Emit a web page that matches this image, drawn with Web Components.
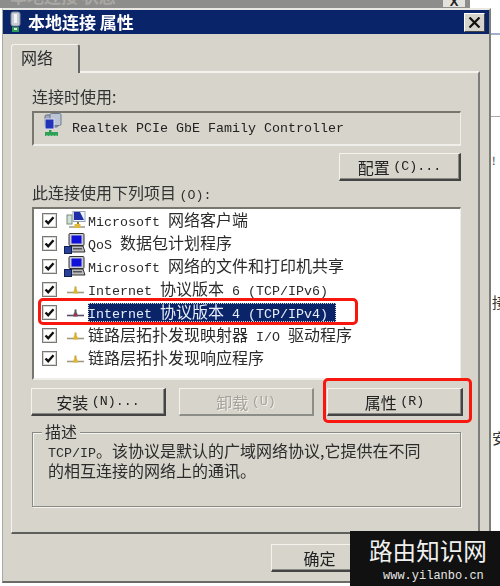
<!DOCTYPE html>
<html lang="zh"><head><meta charset="utf-8"><title>本地连接 属性</title>
<style>
html,body{margin:0;padding:0;background:#fff;overflow:hidden}
</style></head><body>
<x-desktop>
  <x-dialog>
    <x-titlebar>本地连接&nbsp;属性</x-titlebar>
    <x-tabbar>网络</x-tabbar>
    <x-panel>
      <x-label>连接时使用:</x-label>
      <x-field><x-icon slot="icon" type="nic"></x-icon><x-l>Realtek PCIe GbE Family Controller</x-l></x-field>
      <x-action><x-btn w="122">配置 <x-l>(C)...</x-l></x-btn></x-action>
      <x-label second>此连接使用下列项目 <x-l>(O):</x-l></x-label>
      <x-list>
        <x-row><x-icon slot="icon" type="client"></x-icon><x-l>Microsoft </x-l>网络客户端</x-row>
        <x-row><x-icon slot="icon" type="pc"></x-icon><x-l>QoS </x-l>数据包计划程序</x-row>
        <x-row><x-icon slot="icon" type="pc"></x-icon><x-l>Microsoft </x-l>网络的文件和打印机共享</x-row>
        <x-row><x-icon slot="icon" type="proto"></x-icon><x-l>Internet </x-l>协议版本<x-l> 6 (TCP/IPv6)</x-l></x-row>
        <x-row selected><x-icon slot="icon" type="proto" dark></x-icon><x-l>Internet </x-l>协议版本<x-l> 4 (TCP/IPv4)</x-l></x-row>
        <x-row><x-icon slot="icon" type="proto"></x-icon>链路层拓扑发现映射器<x-l> I/O </x-l>驱动程序</x-row>
        <x-row><x-icon slot="icon" type="proto"></x-icon>链路层拓扑发现响应程序</x-row>
      </x-list>
      <x-actions>
        <x-btn>安装 <x-l>(N)...</x-l></x-btn>
        <x-btn disabled>卸载 <x-l>(U)</x-l></x-btn>
        <x-btn>属性 <x-l>(R)</x-l></x-btn>
      </x-actions>
      <x-group legend="描述"><x-l>TCP/IP</x-l>。该协议是默认的广域网络协议,它提供在不同<br>的相互连接的网络上的通讯。</x-group>
    </x-panel>
    <x-footer><x-btn w="98">确定</x-btn></x-footer>
  </x-dialog>
  <x-redbox style="left:38px;top:298px;width:320px;height:27px"></x-redbox>
  <x-redbox style="left:323px;top:378px;width:149px;height:45px"></x-redbox>
  <x-watermark></x-watermark>
</x-desktop>
<script>
const F='"Noto Sans CJK SC","Liberation Sans",sans-serif';
const def=(n,h)=>customElements.define(n,class extends HTMLElement{constructor(){super();this.attachShadow({mode:'open'}).innerHTML=h}});

def('x-l',`<style>:host{display:inline;font-family:"Liberation Mono",monospace;font-size:13.33px;white-space:pre}</style><slot></slot>`);

def('x-desktop',`<style>
:host{display:block;position:relative;width:500px;height:586px;overflow:hidden;background:#fff;font-family:${F};color:#2b2b2b}
.parent{height:8px;width:470px;background:#8d8d8b;overflow:hidden;position:relative}
.parent span{display:block;margin:-16px 0 0 10px;font-size:17px;font-weight:700;line-height:24px;color:#a9a8a4;white-space:pre}
.pclose{position:absolute;left:443px;top:0;width:22px;height:7px;background:#e4e2dc;font:700 13px/3px "Liberation Sans",sans-serif;color:#222;text-align:center}
.bit{position:absolute;left:492px;font-size:15px;line-height:16px;color:#333;white-space:pre}
.ln{position:absolute;left:491px;width:9px;height:1px}
</style>
<div class="parent"><span>本地连接 状态</span><div class="pclose">X</div></div>
<div class="ln" style="top:33px;height:2px;background:#9fb0d0"></div>
<div class="ln" style="top:116px;background:#aaa"></div>
<div class="bit" style="top:294px">接</div>
<div class="bit" style="top:430px">安</div>
<div class="bit" style="top:152px;font-size:11px">!</div>
<slot></slot>`);

def('x-dialog',`<style>
:host{display:flex;flex-direction:column;box-sizing:border-box;width:489px;height:575px;margin-left:2px;background:#d6d4cb;
border-top:2px solid #e9e8e3;border-left:1px solid #a8a8a2;border-right:2px solid #7d7d79;border-bottom:2px solid #6a6a66;filter:blur(.35px)}
</style><slot></slot>`);

def('x-titlebar',`<style>
:host{display:flex;align-items:center;height:24px;background:#0a246a;color:#fff;font-size:17px;font-weight:700;line-height:24px;padding-left:6px;white-space:pre}
svg{flex:none;margin-right:6px}
.t{flex:1}
.x{flex:none;box-sizing:border-box;width:21px;height:19px;margin-right:4px;background:#d6d4cb;border:1px solid;border-color:#fff #444 #444 #fff;display:flex;align-items:center;justify-content:center}
</style>
<svg width="13" height="24" viewBox="0 0 13 24"><rect x="2" y="2" width="9" height="14" rx="2" fill="#c9ccd4" stroke="#7d8a9a"/><rect x="5" y="4" width="3" height="9" fill="#f2f4f8"/><rect x="3" y="17" width="7" height="5" fill="#2f9a55"/><rect x="5" y="18" width="3" height="2" fill="#d8f0d8"/></svg>
<span class="t"><slot></slot></span>
<span class="x"><svg style="margin:0" width="13" height="11" viewBox="0 0 13 11"><path d="M1.500 .5 11.500 10.500M11.500 .5 1.500 10.500" stroke="#111" stroke-width="2.2" fill="none"/></svg></span>`);

def('x-tabbar',`<style>
:host{display:block;height:38px;padding:10px 0 0 8px;box-sizing:border-box;margin-bottom:-1px;position:relative;z-index:1}
.tab{box-sizing:border-box;width:69px;height:29px;padding:0 0 0 9px;font-size:16px;line-height:25px;background:#d6d4cb;
border:solid;border-width:1px 2px 0 1px;border-color:#f4f3ee #666 transparent #f4f3ee;border-radius:3px 3px 0 0}
</style><div class="tab"><slot></slot></div>`);

def('x-panel',`<style>
:host{display:block;box-sizing:border-box;width:469px;height:463px;margin-left:8px;padding:14px 18px 0 20px;
border:solid;border-width:2px 2px 2px 1px;border-color:#f4f3ee #7c7c78 #5e5e5a #f4f3ee}
</style><slot></slot>`);

def('x-label',`<style>
:host{display:block;height:20px;font-size:16px;line-height:18px;white-space:pre;color:#333}
:host([second]){margin-top:2px}
</style><slot></slot>`);

def('x-field',`<style>
:host{display:flex;align-items:flex-start;box-sizing:border-box;width:429px;height:35px;margin:4px 0 0;padding:0 0 0 8px;gap:10px;color:#222;
border:solid;border-width:2px 1px 2px 2px;border-color:#77776f #efeee9 #efeee9 #77776f}
span{line-height:24px}
</style><slot name="icon"></slot><span><slot></slot></span>`);

def('x-action',`<style>:host{display:flex;justify-content:flex-end;margin:7px 0 0;width:429px}</style><slot></slot>`);

customElements.define('x-btn',class extends HTMLElement{constructor(){super();
const w=this.getAttribute('w');
this.attachShadow({mode:'open'}).innerHTML=`<style>
:host{display:flex;align-items:center;justify-content:center;box-sizing:border-box;height:28px;${w?`width:${w}px;`:''}font-size:16px;line-height:24px;white-space:pre;color:#222;background:#d6d4cb;
border:solid;border-width:1px 2px 2px 1px;border-color:#f4f3ee #444 #444 #f4f3ee;box-shadow:inset -1px -1px 0 #8a8a84}
:host([disabled]){color:#a5a39b;border-color:#f4f3ee #8e8e88 #8e8e88 #f4f3ee;box-shadow:none;text-shadow:1px 1px 0 #f0efea}
</style><slot></slot>`}});

def('x-list',`<style>
:host{display:block;box-sizing:border-box;width:429px;height:173px;margin:4px 0 0;background:#fff;
border:solid;border-width:2px 1px 2px 2px;border-color:#77776f #efeee9 #efeee9 #77776f}
</style><slot></slot>`);

def('x-row',`<style>
:host{display:flex;align-items:center;height:23px;padding-left:8px;font-size:16px;color:#2b2b2b;white-space:pre}
svg{flex:none;margin-right:7px}
.t{line-height:16px;height:19px;display:block}
:host([selected]) .t{background:#0a246a;color:#e8edf6;padding-right:8px;outline:1px dotted #d6d4cb;outline-offset:-1px}
</style>
<svg width="15" height="15" viewBox="0 0 15 15"><rect x=".5" y=".5" width="14" height="14" fill="#fff" stroke="#777"/><rect x="1.500" y="1.500" width="12" height="12" fill="none" stroke="#d8d6ce"/><path d="M3.500 7.500 6.200 10.200 11.500 4.300" fill="none" stroke="#111" stroke-width="2.4"/></svg>
<slot name="icon"></slot><span class="t"><slot></slot></span>`);

def('x-actions',`<style>:host{display:grid;grid-template-columns:135px 135px 136px;gap:13px;margin:8px 0 0 -1px;width:431px}</style><slot></slot>`);

customElements.define('x-group',class extends HTMLElement{constructor(){super();this.attachShadow({mode:'open'}).innerHTML=`<style>
:host{display:block;position:relative;box-sizing:border-box;width:429px;height:75px;margin:16px 0 0;padding:9px 10px 0 15px;font-size:16px;line-height:17px;color:#2b2b2b;white-space:nowrap;
border:1px solid #8a8a84;box-shadow:1px 1px 0 #f4f3ee,inset 1px 1px 0 #f4f3ee}
.lg{position:absolute;left:9px;top:-11px;padding:0 3px;background:#d6d4cb;line-height:18px;height:18px}
</style><span class="lg">${this.getAttribute('legend')}</span><slot></slot>`}});

def('x-footer',`<style>:host{display:flex;justify-content:flex-end;padding:10px 120px 0 0}</style><slot></slot>`);

customElements.define('x-icon',class extends HTMLElement{constructor(){super();
const t=this.getAttribute('type'),dark=this.hasAttribute('dark');
const pc=`<rect x="5" y="0.5" width="15" height="12" rx="1" fill="#c9c9d0" stroke="#333"/><rect x="7.500" y="2.500" width="10" height="8" fill="#1010d8"/><path d="M6 13h13l2 6H4z" fill="#bcbcc2" stroke="#333"/><rect x="9" y="15" width="9" height="1.500" fill="#555"/><rect x="0.5" y="13.500" width="7" height="7" fill="#2a3f9a" stroke="#12204f"/>`;
const client=`<rect x="3" y="4" width="5" height="9" fill="#cfe3d2" stroke="#7a8a80"/><rect x="9" y="0.5" width="12" height="10" fill="#f2f4fa" stroke="#9aa4b8"/><path d="M10 1h6l4 8H10z" fill="#1c2ea8"/><path d="M14 11v3" stroke="#8a7a30" stroke-width="2"/><path d="M5 16h16" stroke="#9a9a90" stroke-width="1.500"/><rect x="10.500" y="13" width="6" height="4" fill="#e2b93a"/>`;
const proto=`<path d="M3 12.500h17" stroke="${dark?'#5a4a6a':'#a09a80'}" stroke-width="1.600"/><path d="M11.500 6.500v4" stroke="${dark?'#555':'#c4a534'}" stroke-width="2"/><path d="M9 13.500 10 9.500h3l1 4z" fill="${dark?'#6a5a70':'#e0b52e'}"/>${dark?'<circle cx="11.500" cy="12" r="1.300" fill="#c02030"/>':''}`;
const nic=`<rect x="3" y="2" width="13" height="12" rx="1.500" fill="#9fa9bd" stroke="#5f6a80"/><rect x="8" y="0.500" width="11" height="12" rx="1.500" fill="#bcc5d6" stroke="#6f7a90"/><rect x="3" y="6" width="9" height="10" fill="#2233b8" stroke="#d8dcea"/><rect x="7" y="17" width="2.500" height="3" fill="#2f9a55"/><rect x="3" y="19" width="13" height="4" fill="#2fa058"/><path d="M5 23v-1M8 23v-1M11 23v-1M14 23v-1" stroke="#bfe6c9"/>`;
const cfg={pc:[22,22,pc],client:[22,19,client],proto:[23,20,proto],nic:[20,24,nic]}[t];
this.attachShadow({mode:'open'}).innerHTML=`<style>:host{display:block;flex:none;line-height:0;${t=='nic'?'':'width:24px;'}}</style><svg width="${cfg[0]}" height="${cfg[1]}" viewBox="0 0 ${cfg[0]} ${cfg[1]}">${cfg[2]}</svg>`;
}});

def('x-redbox',`<style>:host{display:block;position:absolute;box-sizing:border-box;border:3px solid #f8170f;border-radius:5px;pointer-events:none}</style>`);

def('x-watermark',`<style>
:host{display:flex;flex-direction:column;position:absolute;left:350px;top:531px;width:150px;height:55px;box-sizing:border-box;background:#111;color:#f0f0ee;padding:5px 0 0 19px}
.a{font-size:23.6px;line-height:28px;white-space:pre;font-family:${F};font-weight:400}
.b{font:12px/16px "Liberation Mono",monospace;margin:4px 0 0 14px;color:#e6e6e4;white-space:pre}
</style><div class="a">路由知识网</div><div class="b">www.yilanbo.cn</div>`);
</script>
</body></html>
